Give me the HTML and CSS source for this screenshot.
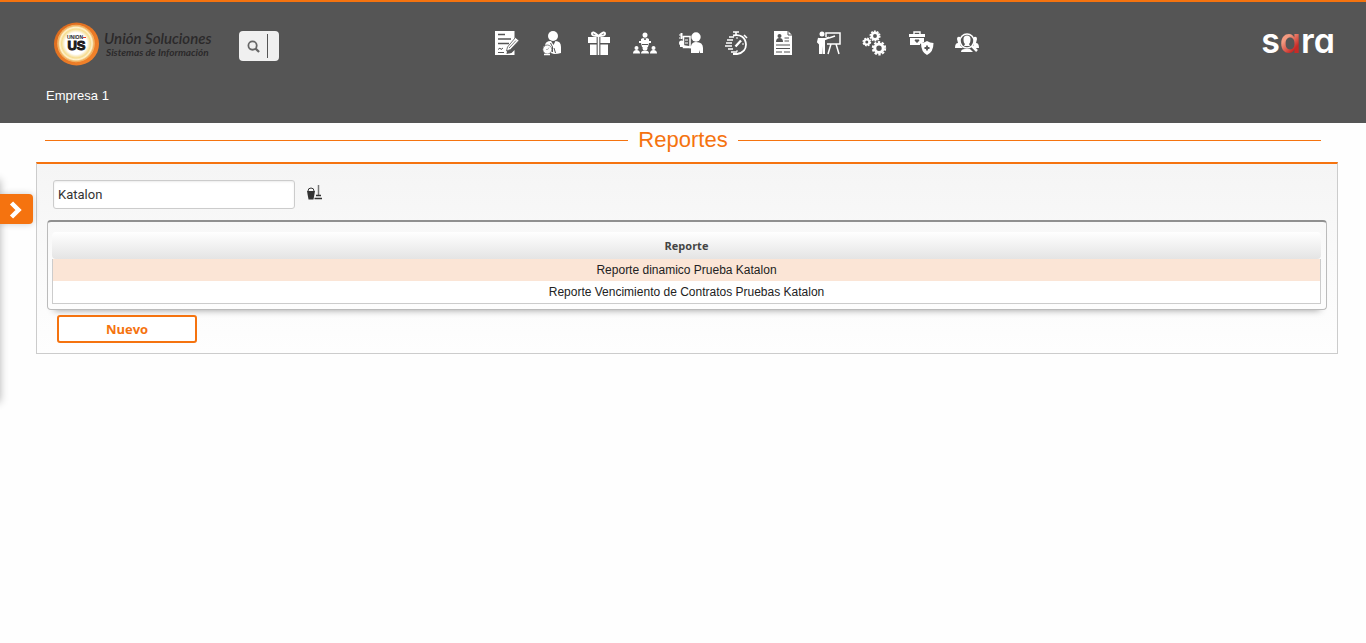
FILE: index.html
```html
<!DOCTYPE html>
<html lang="es">
<head>
<meta charset="utf-8">
<meta name="viewport" content="width=device-width, initial-scale=1">
<title>Reportes</title>
<link rel="stylesheet" href="styles.css">
</head>
<body>
<header class="header">
  <div class="topbar">
    <div class="topbar-start">
      <a class="brand" href="#">
        <svg class="brand-badge" viewBox="0 0 46 44" aria-hidden="true">
          <defs>
            <radialGradient id="glow"><stop offset="0.6" stop-color="#fff"/><stop offset="0.8" stop-color="#f6dc8f"/><stop offset="0.9" stop-color="#fff3cf"/><stop offset="1" stop-color="#e9a94d"/></radialGradient>
            <linearGradient id="ring" x2="1" y2="1"><stop offset="0" stop-color="#d9681c"/><stop offset="1" stop-color="#f5862c"/></linearGradient>
          </defs>
          <ellipse cx="22.500" cy="22" rx="22.500" ry="21.500" fill="url(#ring)"/>
          <circle cx="22" cy="21.500" r="18.800" fill="#f7b469"/>
          <circle cx="22" cy="21.500" r="18" fill="url(#glow)"/>
          <text x="21" y="17" class="badge-small">UNION</text>
          <path d="M29 15.500h3" stroke="#e33b28"/>
          <text x="22.500" y="28" class="badge-big">US</text>
        </svg>
        <span class="brand-text"><span class="brand-name">Unión Soluciones</span><span class="brand-sub">Sistemas de Información</span></span>
      </a>
      <button class="search" type="button" aria-label="Buscar">
        <svg viewBox="0 0 14 14" aria-hidden="true"><circle cx="6" cy="6" r="4.500" fill="none" stroke="#666" stroke-width="1.900"/><path d="M9.300 9.300l3.700 3.700" stroke="#666" stroke-width="2.400"/></svg>
        <span class="search-line"></span>
      </button>
    </div>
    <nav class="modules" aria-label="Módulos">
      <a href="#" aria-label="Contratos"><svg viewBox="0 0 24 24"><path d="M0 0h19.500v11l-7 7-1 5 5-1 3-3v5H0z" fill="#fff"/><path d="M3 3.500h7M3 8h13M3 12.500h11" stroke="#555" stroke-width="1.300"/><path d="M3 18.500l2-1.500 1 1.500 2-1.500M3 21.500h6" stroke="#555" fill="none"/><path d="M11.500 20l1-4 8-9.500 3.500 3-8.500 9z" fill="#fff" stroke="#555" stroke-width=".8"/><path d="M14 17l7-7.500" stroke="#555" stroke-width=".8"/></svg></a>
      <a href="#" aria-label="Empleados"><svg viewBox="0 0 24 24"><circle cx="12" cy="5" r="5" fill="#fff"/><path d="M4 20v-5q0-5 6-5l2.500 4 2-4q5.500 0 5.500 6v6q-3 1-7 1z" fill="#fff"/><path d="M9.500 12l2 4v5M13 17l1.500 5" stroke="#555" fill="none"/><circle cx="6.300" cy="18.500" r="4.500" fill="#fff" stroke="#555" stroke-width=".7"/><path d="M3 23.500h6" stroke="#fff" stroke-width="1.500"/><path d="M5 18.500q2 1 3-2" stroke="#888" stroke-width=".6" fill="none"/></svg></a>
      <a href="#" aria-label="Beneficios"><svg viewBox="0 0 24 24"><path d="M1 6h9v6H1zM13 6h10v6H13zM3 13.500h7V24H3zM13 13.500h8V24h-8zM10.500 6h2v18h-2z" fill="#fff"/><path d="M11.500 5Q5-1 5 3q0 2 6.500 2Q18-1 18 3q0 2-6.500 2" fill="none" stroke="#fff" stroke-width="2"/><path d="M10 6v18M13 6v18" stroke="#555" stroke-width=".8"/></svg></a>
      <a href="#" aria-label="Organización"><svg viewBox="0 0 24 24"><g fill="#fff"><circle cx="12" cy="4" r="2.500"/><path d="M8 10V8q4-3 8 0v2h2v2H6v-2zM8 12h8l-1 4H9z"/><circle cx="3.500" cy="17" r="2"/><circle cx="12" cy="17" r="2.500"/><circle cx="20.500" cy="17" r="2"/><path d="M0 22.500q0-3.500 3.500-3.500T7 22.500zM8 22.500q0-3 4-3t4 3zM17 22.500q0-3.500 3.500-3.500t3.500 3.500z"/></g><path d="M11 7l1 2 1-2M9 13.500h6" fill="none" stroke="#555"/></svg></a>
      <a href="#" aria-label="Nómina"><svg viewBox="0 0 24 24"><circle cx="17" cy="6" r="4.700" fill="#fff"/><path d="M12 22v-7q1-4 5-4 7 0 7 6v5h-3v-3l-1 3z" fill="#fff"/><path d="M4.500 5.500h6.500v11H4.500z" fill="#555" stroke="#fff" stroke-width="1.500"/><path d="M6 9h3M6 12h3" stroke="#fff"/><circle cx="2.500" cy="12" r="2.500" fill="#fff"/><path d="M4 3H1v2h3v2H0M2.500 2v6" fill="none" stroke="#fff"/><path d="M1 15h3l9 1.500" fill="none" stroke="#fff" stroke-width="2"/></svg></a>
      <a href="#" aria-label="Tiempos"><svg viewBox="0 0 24 24"><path d="M8 4.500q12-2 13 9 0 8-9 9.500H8" fill="none" stroke="#fff" stroke-width="1.800"/><path d="M8 1h6M11 1v3M19 4l3 3M4 6h5M2 9h6M1 12h6M0 15h7M3 18h5M6 21h6" stroke="#fff" stroke-width="1.600"/><path d="M10.500 15.500l5.500-6" stroke="#fff" stroke-width="2.400"/><path d="M12 6v2M19 13h-2M12 21v-2" stroke="#fff"/></svg></a>
      <a href="#" aria-label="Hojas de vida"><svg viewBox="0 0 24 24"><path d="M3 0h14l4 4v20H3z" fill="#fff"/><path d="M17 0v4h4" fill="none" stroke="#555"/><circle cx="8.500" cy="5" r="2" fill="#555"/><path d="M5 11q0-4 3.500-4t3.500 4z" fill="#555"/><path d="M13.500 7h4.500M13.500 10h4.500M5 14h14M5 17.500h14M5 21h6M13 21h6" stroke="#555" stroke-width="1.200"/></svg></a>
      <a href="#" aria-label="Capacitación"><svg viewBox="0 0 24 24"><circle cx="5" cy="3" r="2.500" fill="#fff"/><path d="M2 7h6v16H5.500v-8L5 23H2z" fill="#fff"/><path d="M2 7L1 11l3 3M7 8.500l5-2" fill="none" stroke="#fff" stroke-width="2"/><path d="M9 6V2h14v11H10M14 13l-3 10M19 13l3 10" fill="none" stroke="#fff" stroke-width="1.500"/><path d="M12 7l6-2" stroke="#fff" stroke-width="1.500"/></svg></a>
      <a href="#" aria-label="Configuración"><svg viewBox="0 0 24 24"><g fill="none" stroke="#fff"><circle cx="12" cy="5" r="3.200" stroke-width="2.500"/><circle cx="12" cy="5" r="4.800" stroke-width="1.500" stroke-dasharray="1.800 1.200"/><circle cx="3.800" cy="11" r="2.500" stroke-width="2"/><circle cx="3.800" cy="11" r="3.700" stroke-width="1.400" stroke-dasharray="1.700 1.200"/><circle cx="16" cy="17.300" r="4.200" stroke-width="3"/><circle cx="16" cy="17.300" r="6.200" stroke-width="2" stroke-dasharray="2.350 1.550"/></g></svg></a>
      <a href="#" aria-label="Salud"><svg viewBox="0 0 24 24"><path d="M0 3h16v3H0zM1 7h14v4l-4 2v1H1z" fill="#fff"/><path d="M5 3V1h6v2" fill="none" stroke="#fff" stroke-width="1.400"/><path d="M8 12L5.500 9.500 7 8l1 1 1-1 1.500 1.500z" fill="#555"/><path d="M18 10q3 2 6.500 2 0 9-6.500 12-6-3-6-12 3 0 6-2z" fill="#fff"/><path d="M18 14.500v5M15.500 17h5" stroke="#555" stroke-width="1.800"/></svg></a>
      <a href="#" aria-label="Selección"><svg viewBox="0 0 24 24"><path d="M2 8q0-3 3-2v8l3 3H0q0-5 3-5zM22 8q0-3-3-2v8l-2 3h7q0-5-3-5z" fill="#fff"/><path d="M6 21q0-3 4-3h5l3 3z" fill="#fff"/><circle cx="12" cy="10" r="7" fill="#555" stroke="#fff" stroke-width="1.600"/><path d="M8.500 8q0-3.500 3.500-3.500T15.500 8q0 4-1.500 5l1 2H9l1-2q-1.500-1-1.500-5z" fill="#fff"/><path d="M17 15l5 5" stroke="#fff" stroke-width="2.500"/></svg></a>
    </nav>
    <a class="product" href="#">s<span class="product-accent">a</span>ra</a>
  </div>
  <p class="company">Empresa 1</p>
</header>

<aside class="drawer">
  <button class="drawer-toggle" type="button" aria-label="Abrir menú"><svg viewBox="0 0 14 18" aria-hidden="true"><path d="M2.500 2l7 7-7 7" fill="none" stroke="#fff" stroke-width="4.500"/></svg></button>
</aside>

<main class="main">
  <h1 class="title">Reportes</h1>
  <section class="panel">
    <div class="filter">
      <input class="filter-input" type="text" value="Katalon" aria-label="Buscar reporte">
      <button class="clear" type="button" aria-label="Limpiar"><svg viewBox="0 0 15 15" aria-hidden="true"><path d="M0 6h8l-1.500 8.500h-5z" fill="#333"/><path d="M1 6q0-3 3-3t3 3" fill="none" stroke="#333"/><path d="M11.500 0v10" stroke="#777" stroke-width="1.500"/><path d="M9 10.500h5M7.500 13.500h7.500" stroke="#333" stroke-width="1.600"/></svg></button>
    </div>
    <div class="table-box">
      <table class="reports">
        <thead><tr><th scope="col">Reporte</th></tr></thead>
        <tbody>
          <tr class="selected"><td>Reporte dinamico Prueba Katalon</td></tr>
          <tr><td>Reporte Vencimiento de Contratos Pruebas Katalon</td></tr>
        </tbody>
      </table>
    </div>
    <button class="new" type="button">Nuevo</button>
  </section>
</main>
</body>
</html>
```

FILE: styles.css
```css
* { box-sizing: border-box; }
body {
  margin: 0;
  background: #fefefe;
  color: #222;
  font-family: "Liberation Sans", Arial, sans-serif;
  font-size: 13px;
}
button { font: inherit; cursor: pointer; }
a { color: inherit; text-decoration: none; }
svg { display: block; overflow: visible; }

.header {
  border-top: 2px solid #f5730f;
  background: #555;
  padding: 18px 31px 19px 46px;
}
.topbar {
  display: grid;
  grid-template-columns: 441fr auto 356fr;
  align-items: center;
  padding-left: 8px;
  height: 48px;
}
.topbar-start { display: flex; align-items: center; gap: 24px; }
.brand { display: flex; align-items: center; gap: 4px; }
.brand-badge { width: 46px; height: 44px; }
.brand-text {
  display: flex;
  flex-direction: column;
  min-width: 111px;
  color: #2b292a;
  font-family: Lato, sans-serif;
  font-style: italic;
  font-weight: 700;
  white-space: nowrap;
}
.brand-name { font-size: 15px; font-weight: 600; line-height: 15px; }
.brand-sub { font-size: 10px; line-height: 12px; padding-left: 2px; }
.badge-small, .badge-big {
  font-family: "Liberation Sans", Arial, sans-serif;
  font-weight: 700;
  text-anchor: middle;
  fill: #1d1a1c;
}
.badge-small { font-size: 5px; }
.badge-big { font-size: 13px; stroke: #1d1a1c; stroke-width: 1px; }

.search {
  display: flex;
  align-items: center;
  gap: 7px;
  width: 40px;
  height: 30px;
  margin-top: 4px;
  padding: 0 8px;
  border: 0;
  border-radius: 4px;
  background: #f0f0f0;
}
.search svg { flex: none; width: 13px; height: 13px; }
.search-line { flex: none; width: 1px; height: 24px; background: #555; }

.modules { display: flex; gap: 22px; padding-bottom: 2px; }
.modules svg { width: 24px; height: 24px; }

.product {
  justify-self: end;
  color: #fff;
  font-family: Inter, "Liberation Sans", sans-serif;
  font-feature-settings: "cv11";
  font-size: 34px;
  font-weight: 600;
  line-height: 40px;
  padding-bottom: 6px;
}
.product-accent {
  background: linear-gradient(135deg, #f49a80 40%, #c92a26 70%);
  background-clip: text;
  -webkit-background-clip: text;
  color: transparent;
}
.company { margin: 20px 0 0; color: #fff; line-height: 16px; }

.drawer {
  position: fixed;
  top: 180px;
  left: -10px;
  width: 10px;
  height: 222px;
  box-shadow: 0 0 9px rgba(0, 0, 0, .3);
}
.drawer-toggle {
  position: absolute;
  top: 14px;
  left: 10px;
  display: flex;
  align-items: center;
  width: 33px;
  height: 30px;
  padding: 2px 0 0 9px;
  border: 0;
  border-radius: 0 4px 4px 0;
  background: #f5730f;
  box-shadow: 0 0 7px rgba(0, 0, 0, .2);
}
.drawer-toggle svg { width: 14px; height: 18px; }

.main { padding: 2px 28px 0 36px; }
.title {
  display: flex;
  align-items: center;
  gap: 10px;
  margin: 0 17px 7px 9px;
  color: #f5730f;
  font-size: 22px;
  font-weight: 400;
  line-height: 30px;
}
.title::before, .title::after { content: ""; flex: 1; height: 1px; background: currentColor; }

.panel {
  border: 1px solid #ccc;
  border-top: 2px solid #f5730f;
  background: linear-gradient(#f5f5f5, #fefefe);
  padding: 16px 10px 10px;
}
.filter { display: flex; gap: 12px; padding-left: 6px; }
.filter-input {
  width: 242px;
  height: 29px;
  padding: 0 4px;
  border: 1px solid #ccc;
  border-radius: 3px;
  background: #fff;
  box-shadow: inset 0 1px 2px rgba(0, 0, 0, .08);
  color: #333;
  font: 13px Roboto, sans-serif;
}
.clear { align-self: flex-start; margin-top: 5px; padding: 0; border: 0; background: none; }
.clear svg { width: 15px; height: 15px; }

.table-box {
  margin-top: 11px;
  padding: 10px 5px 5px 4px;
  border: 1px solid #bbb;
  border-top: 2px solid #909090;
  border-radius: 4px;
  background: linear-gradient(#f8f8f8, #fdfdfd);
  box-shadow: 0 7px 7px -7px rgba(0, 0, 0, .4);
}
.reports { width: 100%; border-spacing: 0; text-align: center; }
.reports th {
  height: 27px;
  padding: 0;
  border-radius: 4px;
  background: linear-gradient(#fff, #e4e4e4);
  color: #444;
  font: 700 11px "Open Sans", sans-serif;
}
.reports td {
  height: 22px;
  padding: 0;
  border: solid #ccc;
  border-width: 0 1px;
  background: #fff;
  font-size: 12px;
  line-height: 22px;
}
.reports .selected td { background: #fbe5d6; }
.reports tr:last-child td { height: 23px; border-bottom-width: 1px; }

.new {
  display: block;
  width: 140px;
  height: 28px;
  margin: 5px 0 0 10px;
  padding: 0;
  border: 2px solid #f5730f;
  border-radius: 3px;
  background: #fff;
  color: #f5730f;
  font: 700 13px "Open Sans", sans-serif;
}
```
